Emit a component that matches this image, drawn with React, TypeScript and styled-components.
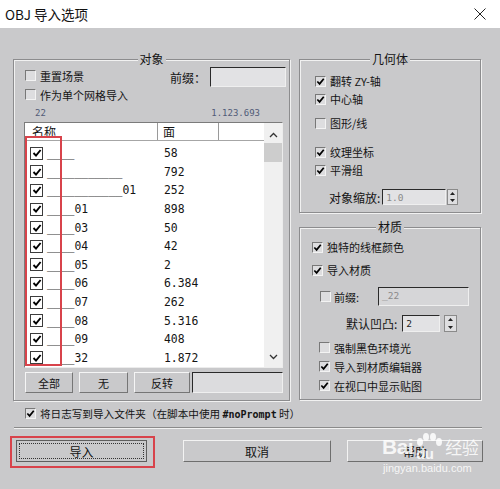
import styled, { createGlobalStyle } from 'styled-components';

const BG = '#c9c9cb';

const GlobalStyle = createGlobalStyle`
  html, body { margin: 0; padding: 0; }
  body {
    background: ${BG};
    font-family: "Noto Sans CJK SC", "Noto Sans", sans-serif;
    color: #141414;
  }
`;

const Window = styled.div`
  position: relative;
  width: 500px;
  height: 489px;
  overflow: hidden;
  background: ${BG};
  display: flex;
  flex-direction: column;
`;

const TitleBar = styled.div`
  height: 28px;
  flex-shrink: 0;
  background: #fff;
  display: flex;
  align-items: center;
  justify-content: space-between;
  padding: 0 14px 0 5px;
  font-size: 13.5px;
  color: #111;
`;

const Body = styled.div`
  padding: 31px 0 0 13px;
  display: flex;
  flex-direction: column;
`;

const Columns = styled.div`
  display: flex;
  gap: 9px;
  align-items: flex-start;
`;

const RightColumn = styled.div`
  display: flex;
  flex-direction: column;
  gap: 14px;
`;

const Group = styled.section<{ $w: number; $h: number; $pt: number }>`
  position: relative;
  box-sizing: border-box;
  width: ${p => p.$w}px;
  height: ${p => p.$h}px;
  padding-top: ${p => p.$pt}px;
  border: 1px solid #8c8c8e;
  box-shadow: inset 1px 1px 0 #f1f1f1, 1px 1px 0 #f1f1f1;
  display: flex;
  flex-direction: column;
`;

const GroupTitle = styled.span`
  position: absolute;
  top: -9px;
  left: 50%;
  transform: translateX(-50%);
  background: ${BG};
  padding: 0 2px;
  font-size: 12px;
  line-height: 16px;
  white-space: nowrap;
`;

const CheckRow = styled.div<{ $indent: number; $h?: number; $mt?: number }>`
  display: flex;
  align-items: center;
  gap: 4px;
  height: ${p => p.$h ?? 18}px;
  margin-top: ${p => p.$mt ?? 0}px;
  padding-left: ${p => p.$indent}px;
  padding-right: 11px;
  font-size: 11px;
  white-space: nowrap;
`;

const SunkenBox = styled.span`
  box-sizing: border-box;
  width: 11px;
  height: 11px;
  flex-shrink: 0;
  border-top: 1px solid #787878;
  border-left: 1px solid #787878;
  border-right: 1px solid #f3f3f3;
  border-bottom: 1px solid #f3f3f3;
  background: #dddddf;
  display: inline-flex;
  align-items: center;
  justify-content: center;
`;

const ListBox = styled.span`
  box-sizing: border-box;
  width: 13px;
  height: 13px;
  flex-shrink: 0;
  border: 1px solid #3c3c3c;
  background: #fff;
  display: inline-flex;
  align-items: center;
  justify-content: center;
`;

function Tick({ size }: { size: number }) {
  return (
    <svg width={size} height={size} viewBox="0 0 10 10">
      <path d="M1.5 5 L4 7.6 L8.6 2" fill="none" stroke="#000" strokeWidth="1.9" />
    </svg>
  );
}

function Check({ checked, label, indent, h, mt }: { checked: boolean; label: React.ReactNode; indent: number; h?: number; mt?: number }) {
  return (
    <CheckRow $indent={indent} $h={h} $mt={mt}>
      <SunkenBox>{checked && <Tick size={9} />}</SunkenBox>
      <span>{label}</span>
    </CheckRow>
  );
}

/* ---------- left group ---------- */

const TopRow = styled.div`
  display: flex;
  align-items: flex-start;
  padding: 6px 3px 0 0;
`;

const TopChecks = styled.div`
  display: flex;
  flex-direction: column;
`;

const PrefixArea = styled.div`
  margin-left: auto;
  margin-top: 1px;
  display: flex;
  align-items: center;
  gap: 4px;
  font-size: 12px;
`;

const TextField = styled.div<{ $w: number; $h: number; $bg?: string }>`
  box-sizing: border-box;
  width: ${p => p.$w}px;
  height: ${p => p.$h}px;
  border-top: 1px solid #2a2a2a;
  border-left: 1px solid #2a2a2a;
  border-right: 1px solid #efefef;
  border-bottom: 1px solid #efefef;
  background: ${p => p.$bg ?? '#e2e2e4'};
  font-family: "DejaVu Sans Mono", monospace;
  font-size: 9.5px;
  color: #8a8a8a;
  padding: 1px 0 0 3px;
  line-height: 13px;
`;

const CountRow = styled.div`
  margin-top: 2px;
  height: 14px;
  display: flex;
  justify-content: space-between;
  align-items: center;
  padding: 0 29px 0 21px;
  font-family: "DejaVu Sans Mono", monospace;
  font-size: 9px;
  color: #515b78;
`;

const ListFrame = styled.div`
  position: relative;
  box-sizing: border-box;
  width: 259px;
  height: 246px;
  margin: 2px 0 0 10px;
  background: #fff;
  border-top: 1px solid #7b7b7b;
  border-left: 1px solid #7b7b7b;
  border-right: 1px solid #ececec;
  border-bottom: 1px solid #ececec;
  display: flex;
`;

const ListMain = styled.div`
  flex: 1;
  display: flex;
  flex-direction: column;
`;

const ListHeader = styled.div`
  box-sizing: border-box;
  height: 18px;
  display: grid;
  grid-template-columns: 133px 61px 1fr;
  border-bottom: 1px solid #a6a6a6;
  font-size: 12px;
  line-height: 17px;
`;

const HeaderCell = styled.div<{ $pl: number; $last?: boolean }>`
  padding-left: ${p => p.$pl}px;
  border-right: ${p => (p.$last ? 'none' : '1px solid #9a9a9a')};
`;

const Rows = styled.div`
  padding-top: 3px;
`;

const Row = styled.div`
  height: 18.6px;
  display: grid;
  grid-template-columns: 139px 1fr;
  align-items: center;
  font-family: "DejaVu Sans Mono", monospace;
  font-size: 11.4px;
`;

const NameCell = styled.div`
  display: flex;
  align-items: center;
  gap: 4px;
  padding-left: 5px;
  white-space: pre;
`;

const ScrollBar = styled.div`
  width: 18px;
  background: #f0f0f0;
  display: flex;
  flex-direction: column;
`;

const ScrollArrow = styled.div<{ $pt: number }>`
  height: 20px;
  display: flex;
  justify-content: center;
  padding-top: ${p => p.$pt}px;
  box-sizing: border-box;
`;

const ScrollThumb = styled.div`
  height: 19px;
  background: #cdcdcd;
`;

const ScrollTrack = styled.div`
  flex: 1;
`;

const RedMark = styled.div<{ $l: number; $t: number; $w: number; $h: number }>`
  position: absolute;
  left: ${p => p.$l}px;
  top: ${p => p.$t}px;
  width: ${p => p.$w}px;
  height: ${p => p.$h}px;
  box-sizing: border-box;
  border: 2px solid #d8434b;
  pointer-events: none;
`;

const ButtonRow = styled.div`
  margin: 4px 0 0 11px;
  display: flex;
  gap: 6px;
`;

const SmallButton = styled.div<{ $w: number }>`
  box-sizing: border-box;
  width: ${p => p.$w}px;
  height: 21px;
  border: 1px solid;
  border-color: #f5f5f5 #767676 #767676 #f5f5f5;
  display: flex;
  align-items: center;
  justify-content: center;
  font-size: 11px;
`;

/* ---------- right groups ---------- */

const SpinRow = styled.div<{ $indent: number; $h: number; $mt: number; $gap: number }>`
  display: flex;
  align-items: center;
  height: ${p => p.$h}px;
  margin-top: ${p => p.$mt}px;
  padding-left: ${p => p.$indent}px;
  gap: ${p => p.$gap}px;
  font-size: 12px;
`;

const SpinButtons = styled.div<{ $w: number; $h: number }>`
  box-sizing: border-box;
  width: ${p => p.$w}px;
  height: ${p => p.$h}px;
  margin-left: -1px;
  border: 1px solid #8a8a8a;
  background: #dedee0;
  display: flex;
  flex-direction: column;
  justify-content: space-around;
  align-items: center;
`;

function Spinner({ w, h }: { w: number; h: number }) {
  return (
    <SpinButtons $w={w} $h={h}>
      <svg width="5" height="3" viewBox="0 0 5 3"><path d="M0 3 L2.5 0 L5 3Z" fill="#222" /></svg>
      <svg width="5" height="3" viewBox="0 0 5 3"><path d="M0 0 L2.5 3 L5 0Z" fill="#222" /></svg>
    </SpinButtons>
  );
}

const PrefixRow = styled.div`
  display: flex;
  align-items: center;
  height: 19px;
  margin-top: 8px;
  padding: 0 11px 0 20px;
  gap: 3px;
  font-size: 11px;
`;

const PushRight = styled.div`
  margin-left: auto;
`;

/* ---------- bottom ---------- */

const LogRow = styled.div`
  margin-top: 3px;
  height: 18px;
  display: flex;
  align-items: center;
  gap: 4px;
  padding-left: 12px;
  font-size: 10.6px;
  white-space: pre;
`;

const Mono = styled.span`
  font-family: "DejaVu Sans Mono", monospace;
  font-size: 10px;
  font-weight: bold;
`;

const Separator = styled.div`
  margin: 5px 0 0 1px;
  width: 468px;
  border-top: 1px solid #8a8a8a;
  border-bottom: 1px solid #f1f1f1;
`;

const Footer = styled.div`
  margin: 7px 0 0 -3px;
  display: flex;
  align-items: flex-start;
`;

const Highlight = styled.div`
  border: 2px solid #d8434b;
  padding: 2px 6px 4px 4px;
`;

const DialogButton = styled.div<{ $w: number; $ml?: number; $default?: boolean }>`
  box-sizing: border-box;
  width: ${p => p.$w}px;
  height: 22px;
  margin-left: ${p => p.$ml ?? 0}px;
  margin-top: ${p => (p.$default ? 0 : 4)}px;
  border: 1px solid;
  border-color: ${p => (p.$default ? '#5e5e5e' : '#f3f3f3 #6e6e6e #6e6e6e #f3f3f3')};
  outline: ${p => (p.$default ? '1px dotted #333' : 'none')};
  outline-offset: -4px;
  display: flex;
  align-items: center;
  justify-content: center;
  font-size: 12px;
`;

const Watermark = styled.div`
  position: absolute;
  left: 382px;
  top: 432px;
  display: flex;
  flex-direction: column;
  color: rgba(255, 255, 255, 0.85);
  pointer-events: none;
  font-family: "Liberation Sans", sans-serif;
`;

const WatermarkBrand = styled.div`
  display: flex;
  align-items: flex-end;
  font-size: 21px;
  font-weight: bold;
  line-height: 30px;
  letter-spacing: -0.5px;
`;

const WatermarkCn = styled.span`
  font-family: "Noto Sans CJK SC", sans-serif;
  font-weight: normal;
  font-size: 17px;
  margin-left: 2px;
`;

const WatermarkUrl = styled.div`
  font-size: 11px;
  line-height: 13px;
  margin-left: 1px;
`;

const names = ['____', '___________', '___________01', '____01', '____03', '____04', '____05', '____06', '____07', '____08', '____09', '____32'];
const faces = ['58', '792', '252', '898', '50', '42', '2', '6.384', '262', '5.316', '408', '1.872'];

export default function App() {
  return (
    <>
      <GlobalStyle />
      <Window>
        <TitleBar>
          <span>OBJ 导入选项</span>
          <svg width="12" height="12" viewBox="0 0 12 12">
            <path d="M0.5 0.5 L11.5 11.5 M11.5 0.5 L0.5 11.5" stroke="#222" strokeWidth="1" />
          </svg>
        </TitleBar>

        <Body>
          <Columns>
            <Group $w={277} $h={342} $pt={0}>
              <GroupTitle>对象</GroupTitle>
              <TopRow>
                <TopChecks>
                  <Check checked={false} label="重置场景" indent={11} h={19} />
                  <Check checked={false} label="作为单个网格导入" indent={11} h={19} />
                </TopChecks>
                <PrefixArea>
                  <span>前缀：</span>
                  <TextField $w={76} $h={20} />
                </PrefixArea>
              </TopRow>
              <CountRow>
                <span>22</span>
                <span>1.123.693</span>
              </CountRow>
              <ListFrame>
                <ListMain>
                  <ListHeader>
                    <HeaderCell $pl={7}>名称</HeaderCell>
                    <HeaderCell $pl={5}>面</HeaderCell>
                    <HeaderCell $pl={0} $last />
                  </ListHeader>
                  <Rows>
                    {names.map((n, i) => (
                      <Row key={i}>
                        <NameCell>
                          <ListBox><Tick size={10} /></ListBox>
                          <span>{n}</span>
                        </NameCell>
                        <span>{faces[i]}</span>
                      </Row>
                    ))}
                  </Rows>
                </ListMain>
                <ScrollBar>
                  <ScrollArrow $pt={9}>
                    <svg width="9" height="6" viewBox="0 0 9 6"><polyline points="1,5 4.5,1.5 8,5" fill="none" stroke="#333" strokeWidth="1.3" /></svg>
                  </ScrollArrow>
                  <ScrollThumb />
                  <ScrollTrack />
                  <ScrollArrow $pt={7}>
                    <svg width="9" height="6" viewBox="0 0 9 6"><polyline points="1,1 4.5,4.5 8,1" fill="none" stroke="#333" strokeWidth="1.3" /></svg>
                  </ScrollArrow>
                </ScrollBar>
                <RedMark $l={0} $t={13} $w={37} $h={230} />
              </ListFrame>
              <ButtonRow>
                <SmallButton $w={48}>全部</SmallButton>
                <SmallButton $w={49}>无</SmallButton>
                <SmallButton $w={56}>反转</SmallButton>
                <TextField $w={91} $h={21} $bg="#dcdcde" style={{ marginLeft: -4 }} />
              </ButtonRow>
            </Group>

            <RightColumn>
              <Group $w={182} $h={154} $pt={12}>
                <GroupTitle>几何体</GroupTitle>
                <Check checked label="翻转 ZY-轴" indent={15} />
                <Check checked label="中心轴" indent={15} />
                <Check checked={false} label="图形/线" indent={15} mt={6} />
                <Check checked label="纹理坐标" indent={15} mt={11} />
                <Check checked label="平滑组" indent={15} />
                <SpinRow $indent={29} $h={16} $mt={10} $gap={2}>
                  <span>对象缩放:</span>
                  <TextField $w={64} $h={16}>1.0</TextField>
                  <Spinner w={11} h={16} />
                </SpinRow>
              </Group>

              <Group $w={182} $h={173} $pt={10}>
                <GroupTitle>材质</GroupTitle>
                <Check checked label="独特的线框颜色" indent={12} />
                <Check checked label="导入材质" indent={12} mt={5} />
                <PrefixRow>
                  <SunkenBox />
                  <span>前缀:</span>
                  <PushRight>
                    <TextField $w={91} $h={19} $bg="#d6d6d8">_22</TextField>
                  </PushRight>
                </PrefixRow>
                <SpinRow $indent={46} $h={17} $mt={9} $gap={5}>
                  <span>默认凹凸:</span>
                  <TextField $w={38} $h={17} style={{ color: '#222' }}>2</TextField>
                  <Spinner w={13} h={17} />
                </SpinRow>
                <Check checked={false} label="强制黑色环境光" indent={19} h={19} mt={6} />
                <Check checked label="导入到材质编辑器" indent={19} h={19} />
                <Check checked label="在视口中显示贴图" indent={19} h={19} />
              </Group>
            </RightColumn>
          </Columns>

          <LogRow>
            <SunkenBox><Tick size={9} /></SunkenBox>
            <span>将日志写到导入文件夹（在脚本中使用 <Mono>#noPrompt</Mono> 时）</span>
          </LogRow>

          <Separator />

          <Footer>
            <Highlight>
              <DialogButton $w={131} $default>导入</DialogButton>
            </Highlight>
            <DialogButton $w={148} $ml={28}>取消</DialogButton>
            <DialogButton $w={136} $ml={16}>帮助</DialogButton>
          </Footer>
        </Body>

        <Watermark>
          <WatermarkBrand>
            <span>Bai</span>
            <svg width="30" height="30" viewBox="0 0 30 30">
              <ellipse cx="7" cy="10" rx="3" ry="4" fill="rgba(255,255,255,0.85)" />
              <ellipse cx="13" cy="5" rx="3" ry="4" fill="rgba(255,255,255,0.85)" />
              <ellipse cx="20" cy="5" rx="3" ry="4" fill="rgba(255,255,255,0.85)" />
              <ellipse cx="26" cy="10" rx="3" ry="4" fill="rgba(255,255,255,0.85)" />
              <text x="3" y="27" fontSize="15" fontWeight="bold" fill="rgba(255,255,255,0.85)" fontFamily="Liberation Sans, sans-serif">du</text>
            </svg>
            <WatermarkCn>经验</WatermarkCn>
          </WatermarkBrand>
          <WatermarkUrl>jingyan.baidu.com</WatermarkUrl>
        </Watermark>
      </Window>
    </>
  );
}
